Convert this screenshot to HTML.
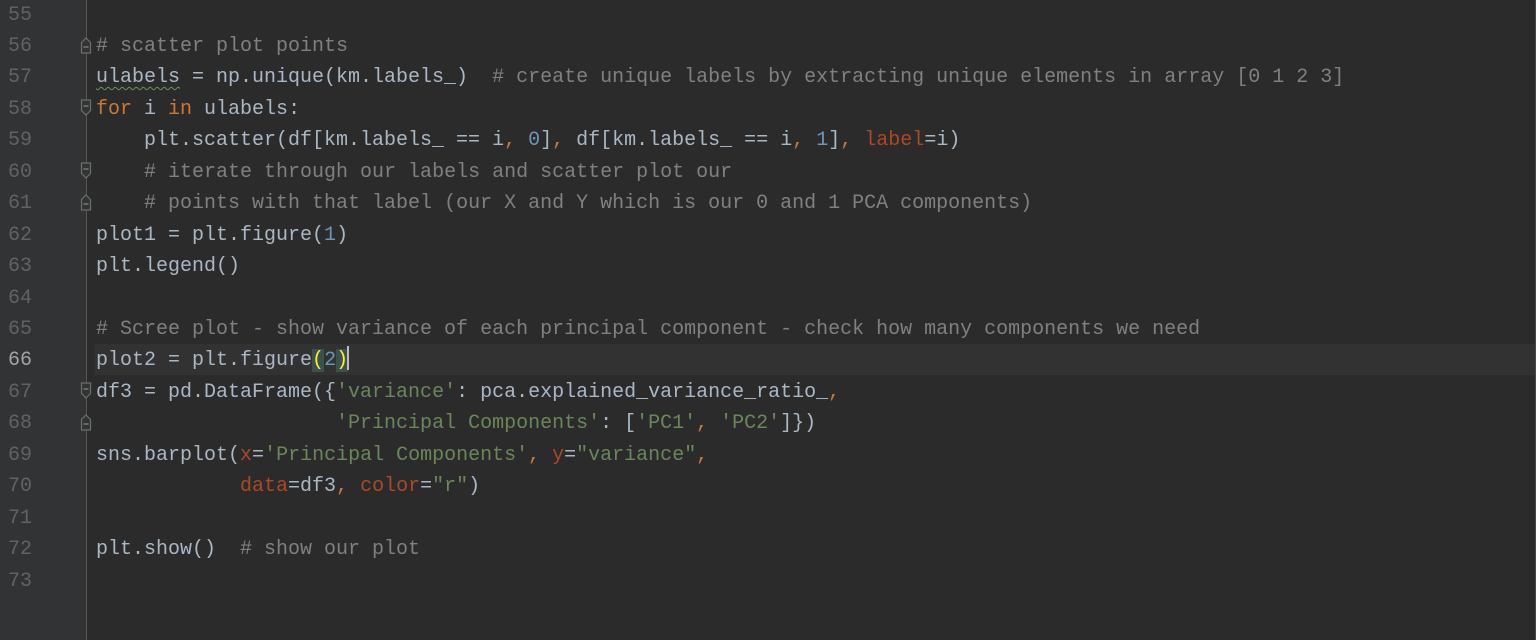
<!DOCTYPE html>
<html><head><meta charset="utf-8"><style>
html,body{margin:0;padding:0;}
body{width:1536px;height:638px;background:#2b2b2b;position:relative;overflow:hidden;font-family:"Liberation Mono",monospace;font-size:20px;transform:translateY(1px);}
#gutter{position:absolute;left:0;top:-1px;width:86px;height:640px;background:#313335;}
#sep{position:absolute;left:86px;top:-1px;width:1px;height:640px;background:#555555;}
#redge{position:absolute;left:1535px;top:-1px;width:1px;height:640px;background:#4a4a4a;}
#cur{position:absolute;left:95px;top:343px;width:1440px;height:31px;background:#323232;}
.ln{position:absolute;left:8px;color:#606366;height:31px;line-height:31px;}
.code{position:absolute;left:96px;color:#a9b7c6;white-space:pre;height:31px;line-height:31px;}
.c{color:#808080}.k{color:#cc7832}.n{color:#6897bb}.s{color:#6a8759}.p{color:#aa4926}
.sq{text-decoration:underline wavy #629755;text-underline-offset:4px;text-decoration-thickness:1px}
.br{background:#3b514d;color:#ffef28}
.caret{display:inline-block;width:2px;height:24px;background:#bbbbbb;vertical-align:-5px;margin-left:-1px}
svg.f{position:absolute;left:79px;}
</style></head><body>
<div id="gutter"></div><div id="sep"></div><div id="redge"></div>
<div id="cur"></div>
<div class="ln" style="top:-1px">55</div>
<div class="ln" style="top:30px">56</div>
<div class="ln" style="top:61px">57</div>
<div class="ln" style="top:93px">58</div>
<div class="ln" style="top:124px">59</div>
<div class="ln" style="top:156px">60</div>
<div class="ln" style="top:187px">61</div>
<div class="ln" style="top:219px">62</div>
<div class="ln" style="top:250px">63</div>
<div class="ln" style="top:282px">64</div>
<div class="ln" style="top:313px">65</div>
<div class="ln" style="top:344px;color:#a4a3a3">66</div>
<div class="ln" style="top:376px">67</div>
<div class="ln" style="top:407px">68</div>
<div class="ln" style="top:439px">69</div>
<div class="ln" style="top:470px">70</div>
<div class="ln" style="top:502px">71</div>
<div class="ln" style="top:533px">72</div>
<div class="ln" style="top:565px">73</div>

<div class="code" style="top:30px"><span class="c"># scatter plot points</span></div>
<div class="code" style="top:61px"><span class="sq">ulabels</span> = np.unique(km.labels_)  <span class="c"># create unique labels by extracting unique elements in array [0 1 2 3]</span></div>
<div class="code" style="top:93px"><span class="k">for</span> i <span class="k">in</span> ulabels:</div>
<div class="code" style="top:124px">    plt.scatter(df[km.labels_ == i<span class="k">,</span> <span class="n">0</span>]<span class="k">,</span> df[km.labels_ == i<span class="k">,</span> <span class="n">1</span>]<span class="k">,</span> <span class="p">label</span>=i)</div>
<div class="code" style="top:156px">    <span class="c"># iterate through our labels and scatter plot our</span></div>
<div class="code" style="top:187px">    <span class="c"># points with that label (our X and Y which is our 0 and 1 PCA components)</span></div>
<div class="code" style="top:219px">plot1 = plt.figure(<span class="n">1</span>)</div>
<div class="code" style="top:250px">plt.legend()</div>
<div class="code" style="top:313px"><span class="c"># Scree plot - show variance of each principal component - check how many components we need</span></div>
<div class="code" style="top:344px">plot2 = plt.figure<span class="br">(</span><span class="n">2</span><span class="br">)</span><span class="caret"></span></div>
<div class="code" style="top:376px">df3 = pd.DataFrame({<span class="s">'variance'</span>: pca.explained_variance_ratio_<span class="k">,</span></div>
<div class="code" style="top:407px">                    <span class="s">'Principal Components'</span>: [<span class="s">'PC1'</span><span class="k">,</span> <span class="s">'PC2'</span>]})</div>
<div class="code" style="top:439px">sns.barplot(<span class="p">x</span>=<span class="s">'Principal Components'</span><span class="k">,</span> <span class="p">y</span>=<span class="s">"variance"</span><span class="k">,</span></div>
<div class="code" style="top:470px">            <span class="p">data</span>=df3<span class="k">,</span> <span class="p">color</span>=<span class="s">"r"</span>)</div>
<div class="code" style="top:533px">plt.show()  <span class="c"># show our plot</span></div>

<svg class="f" style="top:35px" width="14" height="18"><path d="M2.5 17V6.5L7 2L11.5 6.5V17Z" fill="#313335" stroke="#6e6e6e" stroke-width="1.2"/><path d="M4.5 11h5" stroke="#8a8a8a" stroke-width="1.2"/></svg>
<svg class="f" style="top:98px" width="14" height="18"><path d="M2.5 1V11.5L7 16L11.5 11.5V1Z" fill="#313335" stroke="#6e6e6e" stroke-width="1.2"/><path d="M4.5 7h5" stroke="#8a8a8a" stroke-width="1.2"/></svg>
<svg class="f" style="top:161px" width="14" height="18"><path d="M2.5 1V11.5L7 16L11.5 11.5V1Z" fill="#313335" stroke="#6e6e6e" stroke-width="1.2"/><path d="M4.5 7h5" stroke="#8a8a8a" stroke-width="1.2"/></svg>
<svg class="f" style="top:192px" width="14" height="18"><path d="M2.5 17V6.5L7 2L11.5 6.5V17Z" fill="#313335" stroke="#6e6e6e" stroke-width="1.2"/><path d="M4.5 11h5" stroke="#8a8a8a" stroke-width="1.2"/></svg>
<svg class="f" style="top:381px" width="14" height="18"><path d="M2.5 1V11.5L7 16L11.5 11.5V1Z" fill="#313335" stroke="#6e6e6e" stroke-width="1.2"/><path d="M4.5 7h5" stroke="#8a8a8a" stroke-width="1.2"/></svg>
<svg class="f" style="top:412px" width="14" height="18"><path d="M2.5 17V6.5L7 2L11.5 6.5V17Z" fill="#313335" stroke="#6e6e6e" stroke-width="1.2"/><path d="M4.5 11h5" stroke="#8a8a8a" stroke-width="1.2"/></svg>
</body></html>
